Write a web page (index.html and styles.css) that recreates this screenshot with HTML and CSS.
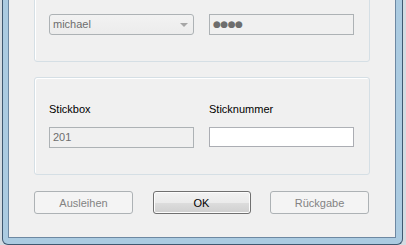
FILE: index.html
```html
<!DOCTYPE html>
<html lang="de">
<head>
    <meta charset="UTF-8">
    <title>Stickbox</title>
    <link rel="stylesheet" href="styles.css">
</head>
<body>
<div class="window">
    <div class="client">
        <div class="group first">
            <div class="row">
                <div class="field">
                    <label class="caption">Techniker</label>
                    <div class="combo">
                        <span>michael</span>
                        <em class="arrow"></em>
                    </div>
                </div>
                <div class="field">
                    <label class="caption">Kennwort</label>
                    <div class="edit readonly"><span class="dots">●●●●</span></div>
                </div>
            </div>
        </div>

        <div class="group">
            <div class="row">
                <div class="field">
                    <label class="caption">Stickbox</label>
                    <div class="edit readonly"><span>201</span></div>
                </div>
                <div class="field">
                    <label class="caption">Sticknummer</label>
                    <div class="edit"></div>
                </div>
            </div>
        </div>

        <div class="buttons">
            <button class="btn" disabled>Ausleihen</button>
            <button class="btn default">OK</button>
            <button class="btn" disabled>Rückgabe</button>
        </div>
    </div>
</div>
</body>
</html>
```

FILE: styles.css
```css
* {
    margin: 0;
    padding: 0;
    box-sizing: border-box;
}

html, body {
    width: 406px;
    height: 245px;
    overflow: hidden;
}

body {
    background: #d4dbe1;
    font-family: "Liberation Sans", Arial, sans-serif;
    font-size: 11px;
    color: #000;
}

/* window frame, the title bar is outside the picture */
.window {
    margin: -50px 0 0 2px;
    width: 401px;
    height: 295px;
    background: #abcbe1;
    border: 1px solid #3f5870;
    border-top: none;
    border-radius: 0 0 6px 6px;
    padding: 0 6px 6px 5px;
}

.client {
    height: 100%;
    background: #f0f0f0;
    border: 1px solid #6d88a2;
    border-top: none;
    padding: 14px 0 0 25px;
}

.group {
    width: 336px;
    border: 1px solid #d5dfe5;
    border-radius: 3px;
    box-shadow: inset 1px 1px #fff;
    padding: 22px 15px 26px 14px;
    margin-bottom: 15px;
}

.row {
    display: flex;
    gap: 15px;
}

.field {
    width: 145px;
}

.caption {
    display: block;
    line-height: 15px;
    padding-top: 2px;
    margin-bottom: 10px;
}

.combo {
    position: relative;
    height: 21px;
    border: 1px solid #adb2b5;
    border-radius: 3px;
    background: linear-gradient(#f2f2f2, #ececec);
    color: #6d6d6d;
    line-height: 19px;
    padding-left: 3px;
}

.combo .arrow {
    position: absolute;
    right: 5px;
    top: 8px;
    width: 0;
    height: 0;
    border-left: 4px solid transparent;
    border-right: 4px solid transparent;
    border-top: 4px solid #a6a6a6;
}

.edit {
    height: 20px;
    border: 1px solid #abadb3;
    border-top-color: #aeb1b6;
    background: #fff;
    line-height: 18px;
    padding-left: 3px;
}

.edit.readonly {
    height: 21px;
    background: #f0f0f0;
    border-color: #adb2b5;
    color: #6d6d6d;
}

.dots {
    font-family: "DejaVu Sans", sans-serif;
    font-size: 9px;
    letter-spacing: -0.5px;
    color: #6d6d6d;
    vertical-align: 1px;
}

.buttons {
    width: 335px;
    display: flex;
    justify-content: space-between;
    padding-top: 1px;
}

.btn {
    width: 99px;
    height: 23px;
    font-family: "Liberation Sans", Arial, sans-serif;
    font-size: 11px;
    border: 1px solid #adb2b5;
    border-radius: 3px;
    background: #f4f4f4;
    color: #838383;
}

.btn.default {
    width: 98px;
    color: #000;
    border-color: #707070;
    background: linear-gradient(#f2f2f2 0%, #ebebeb 50%, #dddddd 51%, #cfcfcf 100%);
    box-shadow: inset 0 0 0 1px #fcfcfc;
}
```
